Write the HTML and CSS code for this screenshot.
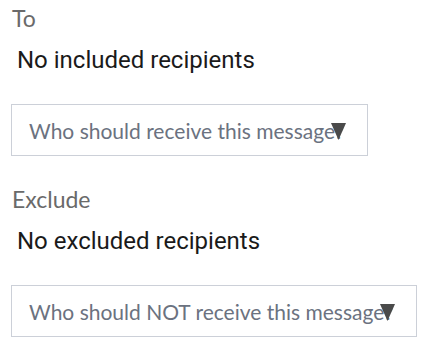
FILE: index.html
```html
<!DOCTYPE html>
<html>
<head>
<meta charset="utf-8">
<link rel="stylesheet" href="styles.css">
</head>
<body>
<div class="form">
  <section class="field">
    <div class="label">To</div>
    <div class="value">No included recipients</div>
    <div class="select">
      <span class="placeholder">Who should receive this message?</span>
      <svg class="arrow" width="15" height="17" viewBox="0 0 15 17"><polygon points="0,0 15,0 7.5,17" fill="#4a4a4a"/></svg>
    </div>
  </section>
  <section class="field">
    <div class="label">Exclude</div>
    <div class="value">No excluded recipients</div>
    <div class="select">
      <span class="placeholder">Who should NOT receive this message?</span>
      <svg class="arrow" width="15" height="17" viewBox="0 0 15 17"><polygon points="0,0 15,0 7.5,17" fill="#4a4a4a"/></svg>
    </div>
  </section>
</div>
</body>
</html>
```

FILE: styles.css
```css
html, body {
  margin: 0;
  padding: 0;
  background: #ffffff;
}
.form {
  display: flex;
  flex-direction: column;
  padding: 0 11px;
}
.field {
  display: flex;
  flex-direction: column;
  align-items: flex-start;
  height: 181px;
}
.label {
  font-family: Lato, "Open Sans", sans-serif;
  font-size: 23px;
  line-height: 36px;
  color: #6a6a6a;
  padding-left: 1px;
}
.value {
  font-family: Roboto, "Liberation Sans", sans-serif;
  font-size: 24px;
  font-weight: 400;
  line-height: 32px;
  color: #1a1a1a;
  padding-left: 6px;
  margin-top: 8px;
}
.select {
  position: relative;
  margin-top: 28px;
  border: 1px solid #ccd0d8;
  height: 50px;
  padding: 0 23px 0 17px;
  display: flex;
  align-items: center;
}
.placeholder {
  font-family: Lato, "Open Sans", sans-serif;
  font-size: 21px;
  color: #6b7280;
}
.arrow {
  position: absolute;
  right: 21px;
  top: 18px;
}
```
